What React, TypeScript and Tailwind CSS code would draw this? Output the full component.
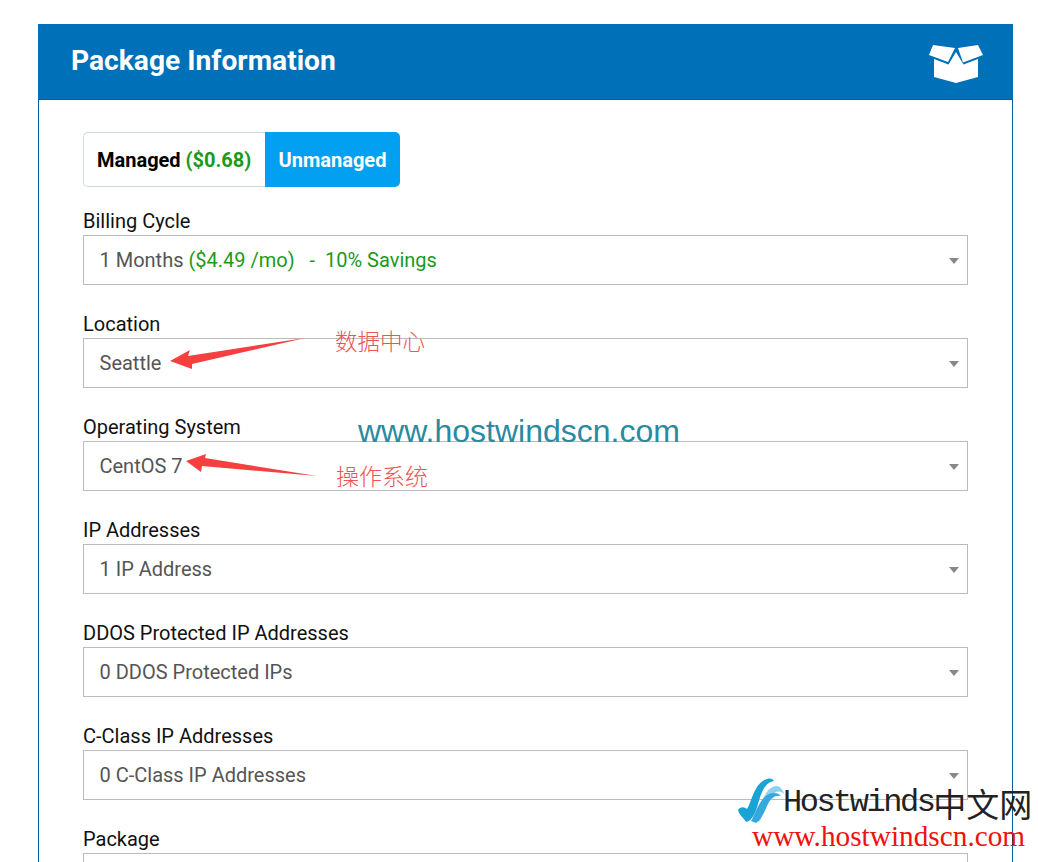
function Field({ label, children, last }: { label: string; children: React.ReactNode; last?: boolean }) {
  return (
    <div className={last ? "" : "mb-[29px]"}>
      <div className="h-6 text-[20px] leading-[20px] text-[#111]">{label}</div>
      <div className="relative flex h-[50px] items-center border border-[#bbbbbb] bg-white pb-[1px] pl-[15.5px] text-[20px] text-[#555]">
        {children}
        <span className="absolute right-[8px] top-[22px] h-0 w-0 border-x-[5px] border-t-[6px] border-x-transparent border-t-[#888]" />
      </div>
    </div>
  );
}

function BoxIcon() {
  return (
    <svg className="mt-[5px]" width="56" height="40" viewBox="0 0 56 40" fill="white">
      <path d="M6 15 L20.5 20.5 L28 8 L35.5 20.5 L50 15 V33 L28 39 L6 33 Z" />
      <path d="M5 1 L27 4 L20 18 L1 11 Z" />
      <path d="M30 4 L50 1 L55 11 L35 18.5 Z" />
    </svg>
  );
}

function Logo() {
  return (
    <svg width="48" height="46" viewBox="0 0 48 46">
      <path d="M1 33 C3 29 8 30 10 32 C15 24 17 6 30 2 C34 1 36 2 37 4 C28 5 24 16 21 27 C19 35 15 44 9 45 C7 41 2 38 1 33 Z" fill="#1ba3d6" />
      <path d="M22 36 C25 22 30 9 40 9 C44 10 46 13 47 17 C43 13 38 14 34 19 C30 24 27 37 22 45 C20 44 21 40 22 36 Z" fill="#8fd0f2" />
      <path d="M14 44 C19 36 22 22 32 17 C37 15 42 16 44 19 C38 18 34 21 31 27 C28 33 25 42 19 46 Z" fill="#36a9dc" />
    </svg>
  );
}

export default function App() {
  return (
    <div className="relative h-[862px] w-[1038px] overflow-hidden bg-white font-['Roboto',sans-serif]">
      <div className="ml-[38px] mt-[24px] inline-block w-[975px] align-top">
        <div className="flex h-[75px] items-center justify-between bg-[#0070b8] pl-[33px] pr-[29px]">
          <h2 className="text-[28.2px] font-bold text-white">Package Information</h2>
          <BoxIcon />
        </div>
        <div className="h-[800px] border-x border-t border-[#0a5ca3] px-[44px] pt-[32px]">
          <div className="mb-[24px] flex h-[55px] w-[317px] text-[20px] font-bold">
            <div className="flex w-[182px] items-center rounded-l-[5px] border border-r-0 border-[#c9d9e8] pl-[13px] text-black">
              Managed&nbsp;<span className="text-[#1a9a1a]">($0.68)</span>
            </div>
            <div className="flex w-[135px] items-center justify-center rounded-r-[5px] bg-[#03a0f2] text-white">Unmanaged</div>
          </div>
          <Field label="Billing Cycle">
            1 Months&nbsp;<span className="whitespace-pre text-[#1a9a1a]">($4.49 /mo)   -  10% Savings</span>
          </Field>
          <Field label="Location">Seattle</Field>
          <Field label="Operating System">CentOS 7</Field>
          <Field label="IP Addresses">1 IP Address</Field>
          <Field label="DDOS Protected IP Addresses">0 DDOS Protected IPs</Field>
          <Field label="C-Class IP Addresses">0 C-Class IP Addresses</Field>
          <Field label="Package" last>
            {""}
          </Field>
        </div>
      </div>

      {/* annotations pasted over the page */}
      <svg className="absolute left-[165px] top-[335px]" width="160" height="150" viewBox="0 0 160 150">
        <path d="M5 26 L25 15 L23 21 L140 3 L27 29 L27 34 Z" fill="#f63f3f" />
        <path d="M21 126 L41 119 L40 123 L152 141 L37 131 L36 137 Z" fill="#f63f3f" />
      </svg>
      <div className="absolute left-[335px] top-[325px] font-['Noto_Sans_CJK_SC',sans-serif] text-[22.5px] leading-[30px] font-light text-[#ef5350]">数据中心</div>
      <div className="absolute left-[336px] top-[460px] font-['Noto_Sans_CJK_SC',sans-serif] text-[23px] leading-[30px] font-light text-[#ef5350]">操作系统</div>
      <div className="absolute left-[358px] top-[413px] font-['Liberation_Sans',sans-serif] text-[32px] leading-[36px] text-[#2a8a9f]">www.hostwindscn.com</div>

      <div className="absolute left-[737px] top-[777px]">
        <Logo />
      </div>
      <div className="absolute left-[783px] top-[786px] flex items-center whitespace-nowrap leading-[34px] text-[#222]">
        <span className="font-['Liberation_Mono',monospace] text-[32px] tracking-[-2.5px]">Hostwinds</span>
        <span className="font-['Noto_Sans_CJK_SC',sans-serif] text-[33px] leading-[34px]">中文网</span>
      </div>
      <div className="absolute left-[752px] top-[822px] font-['Liberation_Serif',serif] text-[29.3px] leading-[28px] whitespace-nowrap text-[#f01010]">www.hostwindscn.com</div>
    </div>
  );
}
